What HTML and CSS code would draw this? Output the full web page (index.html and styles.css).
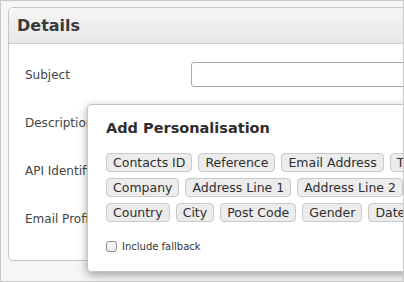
FILE: index.html
```html
<!DOCTYPE html>
<html lang="en">
<head>
    <meta charset="UTF-8">
    <title>Details - Add Personalisation</title>
    <link rel="stylesheet" href="styles.css">
</head>
<body>

    <div class="frame">
        <!-- Details panel -->
        <div class="panel">
            <div class="panel-header">
                <h2>Details</h2>
            </div>
            <div class="panel-body">
                <div class="form-row">
                    <label>Subject</label>
                    <input type="text" class="field">
                </div>
                <div class="form-row">
                    <label>Description</label>
                    <input type="text" class="field">
                </div>
                <div class="form-row">
                    <label>API Identifier</label>
                    <input type="text" class="field">
                </div>
                <div class="form-row">
                    <label>Email Profile</label>
                    <input type="text" class="field">
                </div>
            </div>
        </div>

        <!-- Personalisation popup -->
        <div class="popup">
            <h3>Add Personalisation</h3>
            <div class="tag-row">
                <span class="tag">Contacts ID</span>
                <span class="tag">Reference</span>
                <span class="tag">Email Address</span>
                <span class="tag">Title</span>
                <span class="tag">First Name</span>
            </div>
            <div class="tag-row">
                <span class="tag">Company</span>
                <span class="tag">Address Line 1</span>
                <span class="tag">Address Line 2</span>
                <span class="tag">Address Line 3</span>
            </div>
            <div class="tag-row">
                <span class="tag">Country</span>
                <span class="tag">City</span>
                <span class="tag">Post Code</span>
                <span class="tag">Gender</span>
                <span class="tag">Date of Birth</span>
            </div>
            <label class="fallback">
                <input type="checkbox" class="check">
                Include fallback
            </label>
        </div>
    </div>

</body>
</html>
```

FILE: styles.css
```css
body {
    margin: 0;
    padding: 0;
    font-family: "DejaVu Sans", Verdana, sans-serif;
    color: #333;
}

.frame {
    position: relative;
    width: 404px;
    height: 282px;
    box-sizing: border-box;
    border: 1px solid #c8c8c8;
    background: #f6f6f6;
    overflow: hidden;
    padding: 6px 0 0 7px;
}

.panel {
    width: 520px;
    height: 254px;
    box-sizing: border-box;
    background: #fff;
    border: 1px solid #c6c6c6;
    border-radius: 5px;
}

.panel-header {
    height: 36px;
    box-sizing: border-box;
    background: linear-gradient(to bottom, #f6f6f6, #e7e7e7);
    border-bottom: 1px solid #cfcfcf;
    border-radius: 5px 5px 0 0;
    padding: 8px 8px 0 8px;
}

.panel-header h2 {
    margin: 0;
    font-size: 16px;
    font-weight: bold;
    color: #3a3a3a;
}

.panel-body {
    padding: 18px 0 0 16px;
}

.form-row {
    display: flex;
    align-items: center;
    height: 25px;
    margin-bottom: 23px;
}

.form-row label {
    width: 166px;
    font-size: 12px;
    color: #444;
}

.field {
    width: 300px;
    height: 25px;
    box-sizing: border-box;
    border: 1px solid #a9a9a9;
    border-radius: 3px;
    background: #fff;
    margin: 0;
}

.popup {
    position: absolute;
    left: 86px;
    top: 103px;
    width: 420px;
    height: 168px;
    box-sizing: border-box;
    background: #fff;
    border: 1px solid #c4c4c4;
    border-radius: 4px;
    box-shadow: 0 3px 10px rgba(0, 0, 0, 0.35);
    padding: 15px 0 0 18px;
}

.popup h3 {
    margin: 0 0 17px 0;
    font-size: 14.5px;
    font-weight: bold;
    color: #2e2e2e;
}

.tag-row {
    display: flex;
    gap: 6px;
    white-space: nowrap;
    margin-bottom: 6px;
}

.tag {
    display: inline-block;
    height: 19px;
    line-height: 17px;
    box-sizing: border-box;
    padding: 0 6px;
    font-size: 12.5px;
    color: #2f2f2f;
    background: #ececec;
    border: 1px solid #c9c9c9;
    border-radius: 4px;
}

.fallback {
    display: flex;
    align-items: center;
    gap: 5px;
    margin-top: 19px;
    font-size: 10px;
    color: #333;
}

.check {
    appearance: none;
    -webkit-appearance: none;
    width: 11px;
    height: 11px;
    margin: 0;
    border: 1px solid #8e8e8e;
    border-radius: 3px;
    background: linear-gradient(to bottom, #fff, #ececec);
}
```
